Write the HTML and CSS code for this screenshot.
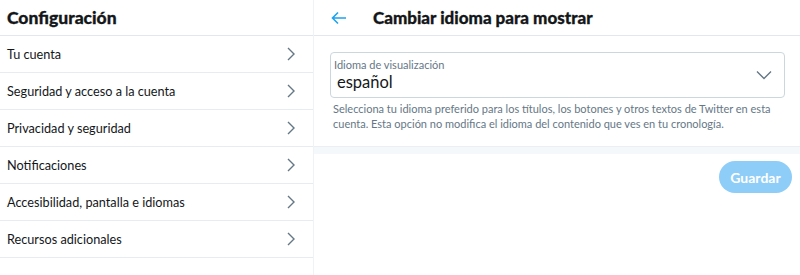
FILE: index.html
```html
<!DOCTYPE html>
<html lang="es">
<head>
    <meta charset="UTF-8">
    <meta name="viewport" content="width=device-width, initial-scale=1.0">
    <link rel="stylesheet" href="styles.css">
    <title>Configuración</title>
</head>
<body>
    <div class="app">
        <div class="settings">
            <div class="header">
                <h1>Configuración</h1>
            </div>
            <ul class="menu">
                <li><span>Tu cuenta</span><svg class="chev" viewBox="0 0 10 16"><path d="M2 2l6 6-6 6"/></svg></li>
                <li><span>Seguridad y acceso a la cuenta</span><svg class="chev" viewBox="0 0 10 16"><path d="M2 2l6 6-6 6"/></svg></li>
                <li><span>Privacidad y seguridad</span><svg class="chev" viewBox="0 0 10 16"><path d="M2 2l6 6-6 6"/></svg></li>
                <li><span>Notificaciones</span><svg class="chev" viewBox="0 0 10 16"><path d="M2 2l6 6-6 6"/></svg></li>
                <li><span>Accesibilidad, pantalla e idiomas</span><svg class="chev" viewBox="0 0 10 16"><path d="M2 2l6 6-6 6"/></svg></li>
                <li><span>Recursos adicionales</span><svg class="chev" viewBox="0 0 10 16"><path d="M2 2l6 6-6 6"/></svg></li>
            </ul>
        </div>
        <div class="detail">
            <div class="header detail-header">
                <svg class="back" viewBox="0 0 16 14"><path d="M15 7H2M7 1.5L1.5 7 7 12.5"/></svg>
                <h2>Cambiar idioma para mostrar</h2>
            </div>
            <div class="form">
                <div class="select-box">
                    <div class="select-text">
                        <label>Idioma de visualización</label>
                        <div class="value">español</div>
                    </div>
                    <svg class="down" viewBox="0 0 16 10"><path d="M1 1.5l7 7 7-7"/></svg>
                </div>
                <p class="help">Selecciona tu idioma preferido para los títulos, los botones y otros textos de Twitter en esta cuenta. Esta opción no modifica el idioma del contenido que ves en tu cronología.</p>
            </div>
            <div class="divider"></div>
            <div class="actions">
                <button disabled>Guardar</button>
            </div>
        </div>
    </div>
</body>
</html>
```

FILE: styles.css
```css
body {
    margin: 0;
    font-family: 'Lato', 'Noto Sans', sans-serif;
    color: #14171a;
    background-color: #fff;
}

.app {
    display: flex;
    height: 275px;
}

.settings {
    width: 313px;
    flex-shrink: 0;
}

.header {
    height: 36px;
    border-bottom: 1px solid #e1e8ed;
    display: flex;
    align-items: center;
    padding: 0 7px;
    box-sizing: border-box;
}

h1 {
    margin: 0;
    font-size: 17.5px;
    font-weight: 900;
    -webkit-text-stroke: 0.3px #14171a;
}

.menu {
    list-style: none;
    margin: 0;
    padding: 0;
}

.menu li {
    height: 37px;
    border-bottom: 1px solid #e6ecf0;
    display: flex;
    align-items: center;
    justify-content: space-between;
    padding: 0 17px 0 7px;
    box-sizing: border-box;
    font-size: 12.7px;
}

.chev {
    width: 10px;
    height: 16px;
    fill: none;
    stroke: #657786;
    stroke-width: 1.4;
}

.detail {
    flex: 1;
    border-left: 1px solid #f0f3f5;
}

.detail-header {
    padding-left: 17px;
}

.back {
    width: 16px;
    height: 14px;
    fill: none;
    stroke: #1da1f2;
    stroke-width: 1.6;
    margin-right: 26px;
}

h2 {
    margin: 0;
    font-size: 17px;
    font-weight: 900;
    -webkit-text-stroke: 0.3px #14171a;
}

.form {
    padding: 16px 15px 15px 16px;
}

.select-box {
    border: 1px solid #ccd6dd;
    border-radius: 4px;
    height: 46px;
    box-sizing: border-box;
    display: flex;
    align-items: center;
    justify-content: space-between;
    padding: 0 12px 0 3px;
}

.select-text label {
    display: block;
    font-size: 11px;
    color: #657786;
    line-height: 14px;
}

.value {
    font-size: 16.5px;
    line-height: 21px;
    padding-left: 3px;
}

.down {
    width: 16px;
    height: 10px;
    fill: none;
    stroke: #657786;
    stroke-width: 1.4;
}

.help {
    margin: 3px 0 0 3px;
    font-size: 11px;
    line-height: 15px;
    color: #657786;
}

.divider {
    height: 7px;
    background-color: #f5f8fa;
    border-top: 1px solid #eceff1;
}

.actions {
    display: flex;
    justify-content: flex-end;
    padding: 7px 8px;
}

button {
    font-family: 'Lato', 'Noto Sans', sans-serif;
    font-size: 14px;
    font-weight: 700;
    color: #fff;
    background-color: #8ecdf8;
    border: none;
    border-radius: 16px;
    height: 32px;
    width: 73px;
}
```
